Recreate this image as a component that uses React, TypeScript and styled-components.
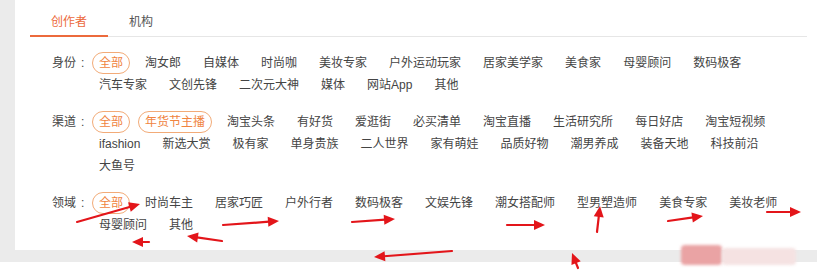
import React from "react";
import styled, { createGlobalStyle } from "styled-components";

const Global = createGlobalStyle`
  html, body { margin: 0; padding: 0; background: #ffffff; }
  body { font-family: "Liberation Sans", "Noto Sans CJK SC", sans-serif; }
  * { box-sizing: border-box; }
`;

const Page = styled.div`
  position: relative;
  width: 817px;
  height: 273px;
  overflow: hidden;
  background: #ffffff;
`;

const Backdrop = styled.div`
  background: #ebebeb;
  padding: 0 0 12px 15px;
`;

const Panel = styled.div`
  background: #ffffff;
  padding: 0 10px 14px 15px;
`;

const TabBar = styled.div`
  display: flex;
  height: 37px;
  border-bottom: 1px solid #e6e6e6;
`;

const Tab = styled.div<{ $active?: boolean }>`
  padding: 12px 21px 3px;
  height: 37px;
  line-height: 20px;
  font-size: 12px;
  color: ${(p) => (p.$active ? "#ec6a3c" : "#555555")};
  border-bottom: 2px solid ${(p) => (p.$active ? "#ec6a3c" : "transparent")};
  margin-bottom: -1px;
`;

const Rows = styled.div`
  display: flex;
  flex-direction: column;
  gap: 15px;
  padding: 15px 0 0 22px;
`;

const Row = styled.div`
  display: flex;
  align-items: flex-start;
`;

const Label = styled.div`
  flex: 0 0 40px;
  font-size: 12px;
  line-height: 22px;
  color: #444444;
  white-space: nowrap;
`;

const Colon = styled.span`
  margin-left: 5px;
`;

const TagList = styled.div`
  flex: 1;
  display: flex;
  flex-wrap: wrap;
  column-gap: 8px;
`;

const Tag = styled.span<{ $active?: boolean }>`
  height: 22px;
  line-height: 20px;
  padding: 0 6px;
  font-size: 12px;
  white-space: nowrap;
  border-radius: 11px;
  border: 1px solid ${(p) => (p.$active ? "#f2ab78" : "transparent")};
  color: ${(p) => (p.$active ? "#f0843f" : "#444444")};
`;

const Footer = styled.div`
  height: 11px;
  background: #ffffff;
`;

const Overlay = styled.svg`
  position: absolute;
  left: 0;
  top: 0;
  pointer-events: none;
`;

const Blot = styled.div<{ $x: number; $y: number; $w: number; $h: number; $c: string }>`
  position: absolute;
  left: ${(p) => p.$x}px;
  top: ${(p) => p.$y}px;
  width: ${(p) => p.$w}px;
  height: ${(p) => p.$h}px;
  background: ${(p) => p.$c};
  border-radius: 4px;
  filter: blur(1.5px);
`;

type Filter = { label: string; items: string[]; active: string[] };

const filters: Filter[] = [
  {
    label: "身份",
    items: ["全部", "淘女郎", "自媒体", "时尚咖", "美妆专家", "户外运动玩家", "居家美学家", "美食家", "母婴顾问", "数码极客", "汽车专家", "文创先锋", "二次元大神", "媒体", "网站App", "其他"],
    active: ["全部"],
  },
  {
    label: "渠道",
    items: ["全部", "年货节主播", "淘宝头条", "有好货", "爱逛街", "必买清单", "淘宝直播", "生活研究所", "每日好店", "淘宝短视频", "ifashion", "新选大赏", "极有家", "单身贵族", "二人世界", "家有萌娃", "品质好物", "潮男养成", "装备天地", "科技前沿", "大鱼号"],
    active: ["全部", "年货节主播"],
  },
  {
    label: "领域",
    items: ["全部", "时尚车主", "居家巧匠", "户外行者", "数码极客", "文娱先锋", "潮女搭配师", "型男塑造师", "美食专家", "美妆老师", "母婴顾问", "其他"],
    active: ["全部"],
  },
];

const arrows: [number, number, number, number][] = [
  [77, 222, 140, 204],
  [222, 241, 187, 236],
  [149, 242, 132, 242],
  [223, 225, 279, 221],
  [352, 222, 395, 219],
  [452, 251, 374, 257],
  [507, 225, 545, 225],
  [597, 232, 600, 206],
  [668, 221, 703, 216],
  [767, 212, 801, 212],
  [578, 268, 572, 253],
];

function Arrow({ a }: { a: [number, number, number, number] }) {
  const [x1, y1, x2, y2] = a;
  const dx = x2 - x1;
  const dy = y2 - y1;
  const len = Math.hypot(dx, dy);
  const ux = dx / len;
  const uy = dy / len;
  const hl = 11;
  const hw = 5;
  const bx = x2 - ux * hl;
  const by = y2 - uy * hl;
  const px = -uy * hw;
  const py = ux * hw;
  return (
    <g>
      <line x1={x1} y1={y1} x2={bx + ux} y2={by + uy} stroke="#e3151a" strokeWidth={2.2} strokeLinecap="round" />
      <polygon points={`${x2},${y2} ${bx + px},${by + py} ${bx - px},${by - py}`} fill="#e3151a" />
    </g>
  );
}

export default function App() {
  return (
    <>
      <Global />
      <Page>
        <Backdrop>
          <Panel>
            <TabBar>
              <Tab $active>创作者</Tab>
              <Tab>机构</Tab>
            </TabBar>
            <Rows>
              {filters.map((f) => (
                <Row key={f.label}>
                  <Label>
                    {f.label}
                    <Colon>:</Colon>
                  </Label>
                  <TagList>
                    {f.items.map((it) => (
                      <Tag key={it} $active={f.active.includes(it)}>
                        {it}
                      </Tag>
                    ))}
                  </TagList>
                </Row>
              ))}
            </Rows>
          </Panel>
        </Backdrop>
        <Footer />
        <Blot $x={681} $y={245} $w={41} $h={20} $c="#eaa3a4" />
        <Blot $x={722} $y={248} $w={74} $h={17} $c="#f5e2e2" />
        <Overlay width={817} height={273} viewBox="0 0 817 273">
          {arrows.map((a, i) => (
            <Arrow key={i} a={a} />
          ))}
        </Overlay>
      </Page>
    </>
  );
}
